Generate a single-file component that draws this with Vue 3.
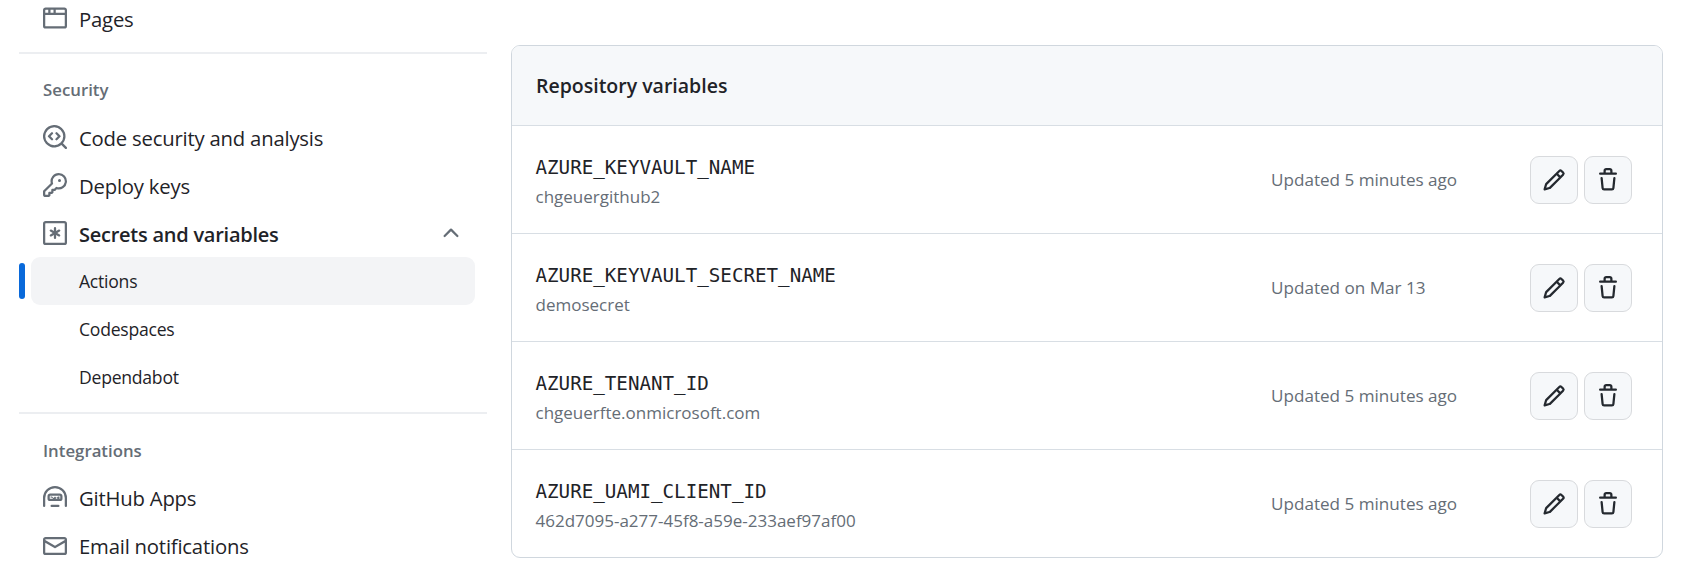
<script setup>
// settings sidebar and the repository variables table
const icons = {
  browser:
    'M0 2.75C0 1.784.784 1 1.75 1h12.5c.966 0 1.75.784 1.75 1.75v10.5A1.75 1.75 0 0 1 14.25 15H1.75A1.75 1.75 0 0 1 0 13.25ZM14.5 6h-13v7.25c0 .138.112.25.25.25h12.5a.25.25 0 0 0 .25-.25Zm-6-3.5v2h6v-1.75a.25.25 0 0 0-.25-.25ZM5 2.5v2h2v-2Zm-3.25 0a.25.25 0 0 0-.25.25V4.5h2v-2Z',
  codescan:
    'M8.47 4.97a.75.75 0 0 0 0 1.06L9.94 7.5 8.47 8.97a.75.75 0 1 0 1.06 1.06l2-2a.75.75 0 0 0 0-1.06l-2-2a.75.75 0 0 0-1.06 0ZM6.53 6.03a.75.75 0 0 0-1.06-1.06l-2 2a.75.75 0 0 0 0 1.06l2 2a.75.75 0 1 0 1.06-1.06L5.06 7.5l1.47-1.47Z M12.246 13.307a7.5 7.5 0 1 1 1.06-1.06l2.474 2.473a.75.75 0 1 1-1.06 1.06ZM13.5 7.5a6 6 0 1 0-12 0 6 6 0 0 0 12 0Z',
  key:
    'M10.5 0a5.499 5.499 0 1 1-1.288 10.848l-.932.932a.749.749 0 0 1-.53.22H7v.75a.749.749 0 0 1-.22.53l-.5.5a.749.749 0 0 1-.53.22H5v.75a.749.749 0 0 1-.22.53l-.5.5a.749.749 0 0 1-.53.22h-2A1.75 1.75 0 0 1 0 14.25v-2c0-.199.079-.389.22-.53l4.932-4.932A5.5 5.5 0 0 1 10.5 0Zm-4 5.5c-.001.431.069.86.205 1.269a.75.75 0 0 1-.181.768L1.5 12.56v1.69c0 .138.112.25.25.25h1.69l.06-.06v-1.19a.75.75 0 0 1 .75-.75h1.19l.06-.06v-1.19a.75.75 0 0 1 .75-.75h1.19l1.023-1.025a.75.75 0 0 1 .768-.18A4 4 0 1 0 6.5 5.5ZM11 6a1 1 0 1 1 0-2 1 1 0 0 1 0 2Z',
  asterisk:
    'M0 1.75C0 .784.784 0 1.75 0h12.5C15.216 0 16 .784 16 1.75v12.5A1.75 1.75 0 0 1 14.25 16H1.75A1.75 1.75 0 0 1 0 14.25Zm1.75-.25a.25.25 0 0 0-.25.25v12.5c0 .138.112.25.25.25h12.5a.25.25 0 0 0 .25-.25V1.75a.25.25 0 0 0-.25-.25ZM8 4a.75.75 0 0 1 .75.75V6.7l1.69-.975a.75.75 0 0 1 .75 1.3L9.5 8l1.69.976a.75.75 0 0 1-.75 1.298L8.75 9.3v1.951a.75.75 0 0 1-1.5 0V9.299l-1.69.976a.75.75 0 0 1-.75-1.3L6.5 8l-1.69-.975a.75.75 0 0 1 .75-1.3l1.69.976V4.75A.75.75 0 0 1 8 4Z',
  hubot:
    'M0 8a8 8 0 0 1 16 0v5.25a.75.75 0 0 1-1.5 0V8a6.5 6.5 0 1 0-13 0v5.25a.75.75 0 0 1-1.5 0Zm3-1.25C3 5.784 3.784 5 4.75 5h6.5c.966 0 1.75.784 1.75 1.75v1.5A1.75 1.75 0 0 1 11.25 10h-6.5A1.75 1.75 0 0 1 3 8.25Zm1.75-.25a.25.25 0 0 0-.25.25v1.5c0 .138.112.25.25.25h6.5a.25.25 0 0 0 .25-.25v-1.5a.25.25 0 0 0-.25-.25ZM5 7h1l1 1 1-1 1 1 1-1h1v.6L10.9 8.8a.5.5 0 0 1-.7 0L9 7.8 8 8.8a.5.5 0 0 1-.7 0L6 7.8 5 7.6Zm.75 5.5h4.5a.75.75 0 0 1 0 1.5h-4.5a.75.75 0 0 1 0-1.5Z',
  mail:
    'M1.75 2h12.5c.966 0 1.75.784 1.75 1.75v8.5A1.75 1.75 0 0 1 14.25 14H1.75A1.75 1.75 0 0 1 0 12.25v-8.5C0 2.784.784 2 1.75 2ZM1.5 12.251c0 .138.112.25.25.25h12.5a.25.25 0 0 0 .25-.25V5.809L8.38 9.397a.75.75 0 0 1-.76 0L1.5 5.809v6.442Zm13-8.181v-.32a.25.25 0 0 0-.25-.25H1.75a.25.25 0 0 0-.25.25v.32L8 7.88Z',
  chevronUp:
    'M3.22 10.53a.749.749 0 0 1 0-1.06l4.25-4.25a.749.749 0 0 1 1.06 0l4.25 4.25a.749.749 0 1 1-1.06 1.06L8 6.811 4.28 10.53a.749.749 0 0 1-1.06 0Z',
  pencil:
    'M11.013 1.427a1.75 1.75 0 0 1 2.474 0l1.086 1.086a1.75 1.75 0 0 1 0 2.474l-8.61 8.61c-.21.21-.47.364-.756.445l-3.251.93a.75.75 0 0 1-.927-.928l.929-3.25c.081-.286.235-.547.445-.758l8.61-8.61Zm.176 4.823L9.75 4.81l-6.286 6.287a.253.253 0 0 0-.064.108l-.558 1.953 1.953-.558a.253.253 0 0 0 .108-.064Zm1.238-3.763a.25.25 0 0 0-.354 0L10.811 3.75l1.439 1.44 1.263-1.263a.25.25 0 0 0 0-.354Z',
  trash:
    'M11 1.75V3h2.25a.75.75 0 0 1 0 1.5H2.75a.75.75 0 0 1 0-1.5H5V1.75C5 .784 5.784 0 6.75 0h2.5C10.216 0 11 .784 11 1.75ZM4.496 6.675l.66 6.6a.25.25 0 0 0 .249.225h5.19a.25.25 0 0 0 .249-.225l.66-6.6a.75.75 0 0 1 1.492.149l-.66 6.6A1.748 1.748 0 0 1 10.595 15h-5.19a1.75 1.75 0 0 1-1.741-1.575l-.66-6.6a.75.75 0 1 1 1.492-.15ZM6.5 1.75V3h3V1.75a.25.25 0 0 0-.25-.25h-2.5a.25.25 0 0 0-.25.25Z'
}

const variables = [
  { name: 'AZURE_KEYVAULT_NAME', value: 'chgeuergithub2', updated: 'Updated 5 minutes ago' },
  { name: 'AZURE_KEYVAULT_SECRET_NAME', value: 'demosecret', updated: 'Updated on Mar 13' },
  { name: 'AZURE_TENANT_ID', value: 'chgeuerfte.onmicrosoft.com', updated: 'Updated 5 minutes ago' },
  { name: 'AZURE_UAMI_CLIENT_ID', value: '462d7095-a277-45f8-a59e-233aef97af00', updated: 'Updated 5 minutes ago' }
]
</script>

<template>
  <div class="page">
    <nav class="sidebar">
      <a class="item low">
        <svg class="icon" viewBox="0 0 16 16"><path :d="icons.browser" /></svg>
        Pages
      </a>
      <hr class="divider" />
      <h3 class="heading">Security</h3>
      <a class="item low">
        <svg class="icon" viewBox="0 0 16 16"><path :d="icons.codescan" /></svg>
        Code security and analysis
      </a>
      <a class="item low">
        <svg class="icon" viewBox="0 0 16 16"><path :d="icons.key" /></svg>
        Deploy keys
      </a>
      <a class="item low strong">
        <svg class="icon" viewBox="0 0 16 16"><path :d="icons.asterisk" /></svg>
        Secrets and variables
        <svg class="chevron" viewBox="0 0 16 16"><path :d="icons.chevronUp" /></svg>
      </a>
      <a class="sub active">Actions</a>
      <a class="sub">Codespaces</a>
      <a class="sub">Dependabot</a>
      <hr class="divider wide" />
      <h3 class="heading">Integrations</h3>
      <a class="item">
        <svg class="icon" viewBox="0 0 16 16"><path :d="icons.hubot" /></svg>
        GitHub Apps
      </a>
      <a class="item">
        <svg class="icon" viewBox="0 0 16 16"><path :d="icons.mail" /></svg>
        Email notifications
      </a>
    </nav>

    <main class="main">
      <section class="box">
        <header class="box-header">Repository variables</header>
        <div class="row" v-for="v in variables" :key="v.name">
          <div class="info">
            <div class="name">{{ v.name }}</div>
            <div class="value">{{ v.value }}</div>
          </div>
          <div class="updated">{{ v.updated }}</div>
          <div class="actions">
            <button class="btn" type="button">
              <svg viewBox="0 0 16 16"><path :d="icons.pencil" /></svg>
            </button>
            <button class="btn" type="button">
              <svg viewBox="0 0 16 16"><path :d="icons.trash" /></svg>
            </button>
          </div>
        </div>
      </section>
    </main>
  </div>
</template>

<style>
html,
body {
  background: #fff;
  overflow: hidden;
}
</style>

<style scoped>
.page {
  display: flex;
  gap: 24px;
  height: 576px;
  overflow: hidden;
  padding-left: 19px;
  color: #1f2328;
  font-family: "Open Sans", "Noto Sans", sans-serif;
}

.sidebar {
  width: 468px;
  flex: none;
  margin-top: -6px;
}

.item {
  display: flex;
  align-items: center;
  box-sizing: border-box;
  height: 48px;
  padding-left: 24px;
  font-size: 20.3px;
  letter-spacing: -0.2px;
}

/* label sits a pixel lower than its icon in the upper groups */
.low {
  padding-top: 2px;
}

.low svg {
  margin-bottom: 2px;
}

.icon {
  width: 24px;
  height: 24px;
  margin-right: 12px;
  fill: #656d76;
  flex: none;
}

.strong {
  font-size: 20px;
  letter-spacing: -0.25px;
  font-weight: 600;
}

.chevron {
  width: 24px;
  height: 24px;
  margin-left: auto;
  margin-right: 24px;
  fill: #656d76;
}

.sub {
  display: flex;
  align-items: center;
  position: relative;
  height: 48px;
  margin-left: 12px;
  margin-right: 12px;
  padding-left: 48px;
  border-radius: 9px;
  font-size: 17.6px;
  letter-spacing: -0.25px;
}

.active {
  background: #f3f4f6;
}

.active::before {
  content: "";
  position: absolute;
  left: -12px;
  top: 6px;
  width: 6px;
  height: 36px;
  border-radius: 6px;
  background: #0969da;
}

.divider {
  height: 1.5px;
  margin: 10px 0 11.5px;
  border: 0;
  background: #eceef1;
}

.wide {
  margin: 11px 0 12.5px;
}

.heading {
  height: 48px;
  margin: 0;
  padding-left: 24px;
  display: flex;
  align-items: center;
  font-size: 16.8px;
  font-weight: 600;
  color: #656d76;
}

.main {
  width: 1152px;
  flex: none;
  padding-top: 45px;
}

.box {
  border: 1.5px solid #d0d7de;
  border-radius: 9px;
  overflow: hidden;
}

.box-header {
  display: flex;
  align-items: center;
  height: 78.5px;
  padding-left: 24px;
  background: #f6f8fa;
  font-size: 19.5px;
  font-weight: 600;
}

.row {
  display: flex;
  align-items: center;
  box-sizing: border-box;
  height: 108px;
  padding: 0 30px 0 23.5px;
  border-top: 1.5px solid #d8dee4;
}

.info {
  flex: 1;
  padding-top: 6px;
}

.name {
  font-family: "DejaVu Sans Mono", monospace;
  font-size: 19.2px;
  line-height: 30px;
}

.value {
  margin-top: -1px;
  font-size: 17px;
  line-height: 30px;
  color: #656d76;
}

.updated {
  width: 259px;
  font-size: 17.1px;
  color: #656d76;
}

.actions {
  display: flex;
  gap: 6px;
  margin-top: 1px;
}

.btn {
  display: flex;
  align-items: center;
  justify-content: center;
  width: 48px;
  height: 48px;
  padding: 0;
  border: 1.5px solid #d8dadd;
  border-radius: 9px;
  background: #f6f8fa;
}

.btn svg {
  width: 24px;
  height: 24px;
  fill: #24292f;
}
</style>
